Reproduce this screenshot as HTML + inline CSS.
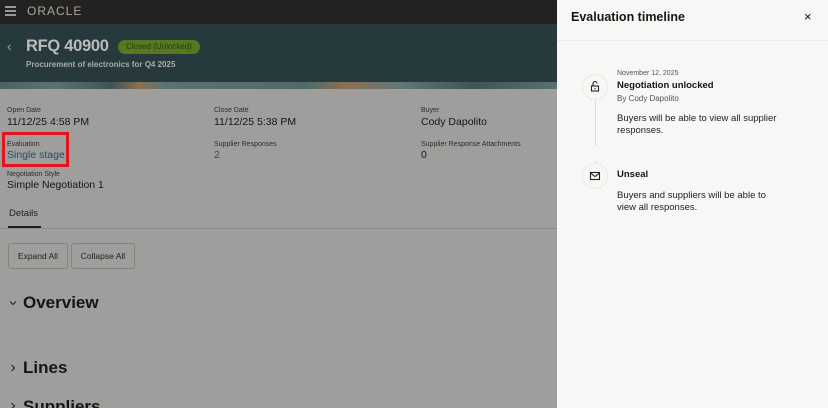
<!DOCTYPE html>
<html style="overflow:hidden;width:828px;height:408px"><head><meta charset="utf-8"><style>
*{margin:0;padding:0;box-sizing:border-box}
html,body{width:828px;height:408px;overflow:hidden}
body{font-family:"Liberation Sans","DejaVu Sans",sans-serif;background:#9f9e9c;position:relative;color:#161513}
.a{position:absolute;white-space:nowrap}
.lbl{font-size:7px;color:#2e2d2b}
.val{font-size:10.5px;color:#161513}
</style></head><body>
<div class="a" style="left:0;top:0;width:557px;height:24px;background:#242220"></div>
<div class="a" style="left:5px;top:6px;width:11px;height:2px;background:#9a9896;box-shadow:0 4px 0 #9a9896,0 8px 0 #9a9896"></div>
<div class="a" style="left:27px;top:4px;font-size:12px;color:#a8a6a3;letter-spacing:1px">ORACLE</div>
<div class="a" style="left:0;top:24px;width:557px;height:58px;background:#263a3d"></div>
<div class="a" style="left:0;top:82px;width:557px;height:7px;background:linear-gradient(90deg,#4a6466 0,#5a7272 10%,#3d5558 20%,#8a7050 25%,#5a7272 30%,#506a6b 55%,#8a7050 62%,#5f7779 72%,#3d5558 85%,#5a7272 100%)"></div>
<div class="a" style="left:7px;top:38px;font-size:14px;color:#9aa3a3">‹</div>
<div class="a" style="left:26px;top:37px;font-size:16.5px;font-weight:bold;color:#b9bab9;letter-spacing:-0.3px">RFQ 40900</div>
<div class="a" style="left:118px;top:40px;width:82px;height:14px;border-radius:7px;background:#56781f;color:#2a3d12;font-size:8px;line-height:14px;text-align:center">Closed (Unlocked)</div>
<div class="a" style="left:26px;top:60px;font-size:8px;font-weight:bold;color:#a8acab">Procurement of electronics for Q4 2025</div>

<div class="a lbl" style="left:7px;top:107px">Open Date</div>
<div class="a val" style="left:7px;top:116px">11/12/25 4:58 PM</div>
<div class="a lbl" style="left:214px;top:107px">Close Date</div>
<div class="a val" style="left:214px;top:116px">11/12/25 5:38 PM</div>
<div class="a lbl" style="left:421px;top:107px">Buyer</div>
<div class="a val" style="left:421px;top:116px">Cody Dapolito</div>
<div class="a lbl" style="left:7px;top:141px">Evaluation</div>
<div class="a val" style="left:7px;top:149px;color:#1e4f6e">Single stage</div>
<div class="a" style="left:2px;top:132px;width:67px;height:35px;border:3px solid #e3141c"></div>
<div class="a lbl" style="left:214px;top:141px">Supplier Responses</div>
<div class="a val" style="left:214px;top:149px;color:#1e4f6e">2</div>
<div class="a lbl" style="left:421px;top:141px">Supplier Response Attachments</div>
<div class="a val" style="left:421px;top:149px">0</div>
<div class="a lbl" style="left:7px;top:171px">Negotiation Style</div>
<div class="a val" style="left:7px;top:179px">Simple Negotiation 1</div>
<div class="a" style="left:9px;top:208px;font-size:9.5px;color:#222">Details</div>
<div class="a" style="left:8px;top:226px;width:33px;height:2px;background:#1f1e1c"></div>
<div class="a" style="left:0;top:228px;width:557px;height:1px;background:#8e8d8b"></div>
<div class="a" style="left:8px;top:243px;width:60px;height:26px;border:1px solid #85837f;border-radius:3px;font-size:8.5px;line-height:24px;text-align:center;color:#222">Expand All</div>
<div class="a" style="left:71px;top:243px;width:64px;height:26px;border:1px solid #85837f;border-radius:3px;font-size:8.5px;line-height:24px;text-align:center;color:#222">Collapse All</div>
<svg class="a" style="left:9px;top:300px" width="8" height="6" viewBox="0 0 8 6"><path d="M1 1.5l3 3 3-3" fill="none" stroke="#222" stroke-width="1.1"/></svg>
<div class="a" style="left:23px;top:293px;font-size:17px;font-weight:bold;color:#161513">Overview</div>
<svg class="a" style="left:10px;top:364px" width="6" height="8" viewBox="0 0 6 8"><path d="M1.5 1l3 3-3 3" fill="none" stroke="#222" stroke-width="1.1"/></svg>
<div class="a" style="left:23px;top:358px;font-size:17px;font-weight:bold;color:#161513">Lines</div>
<svg class="a" style="left:10px;top:402px" width="6" height="8" viewBox="0 0 6 8"><path d="M1.5 1l3 3-3 3" fill="none" stroke="#222" stroke-width="1.1"/></svg>
<div class="a" style="left:23px;top:397px;font-size:17px;font-weight:bold;color:#161513">Suppliers</div>

<div class="a" style="left:557px;top:0;width:271px;height:408px;background:#f8f7f5"></div>
<div class="a" style="left:557px;top:40px;width:271px;height:1px;background:#ecebe9"></div>
<div class="a" style="left:571px;top:10px;font-size:12.5px;font-weight:bold">Evaluation timeline</div>
<div class="a" style="left:804px;top:9px;font-size:13px">×</div>
<div class="a" style="left:595px;top:100px;width:1px;height:46px;background:#dcdad7"></div>
<div class="a" style="left:595px;top:161px;width:1px;height:6px;background:#dcdad7"></div>
<div class="a" style="left:582px;top:74px;width:26px;height:26px;border-radius:50%;border:1px solid #ebe9e6;background:#f8f7f5"></div>
<svg class="a" style="left:589px;top:80px" width="12" height="13" viewBox="0 0 12 13"><path d="M4 6V3.5a2 2 0 0 1 4 0" fill="none" stroke="#222" stroke-width="1.1"/><rect x="2.5" y="6" width="7" height="5" fill="none" stroke="#222" stroke-width="1.1"/><rect x="5.5" y="8" width="1" height="1.5" fill="#222"/></svg>
<div class="a" style="left:582px;top:163px;width:26px;height:26px;border-radius:50%;border:1px solid #ebe9e6;background:#f8f7f5"></div>
<svg class="a" style="left:589px;top:170px" width="12" height="12" viewBox="0 0 12 12"><rect x="1.5" y="2.5" width="9" height="7" fill="none" stroke="#222" stroke-width="1.1"/><path d="M1.5 3l4.5 3.5L10.5 3" fill="none" stroke="#222" stroke-width="1.1"/></svg>
<div class="a" style="left:617px;top:70px;font-size:7px;color:#555">November 12, 2025</div>
<div class="a" style="left:617px;top:80px;font-size:9.5px;font-weight:bold">Negotiation unlocked</div>
<div class="a" style="left:617px;top:94px;font-size:8px;color:#555">By Cody Dapolito</div>
<div class="a" style="left:617px;top:113px;font-size:9.5px;line-height:12px;color:#222">Buyers will be able to view all supplier<br>responses.</div>
<div class="a" style="left:617px;top:169px;font-size:9.5px;font-weight:bold">Unseal</div>
<div class="a" style="left:617px;top:190px;font-size:9.5px;line-height:12px;color:#222">Buyers and suppliers will be able to<br>view all responses.</div>
</body></html>
